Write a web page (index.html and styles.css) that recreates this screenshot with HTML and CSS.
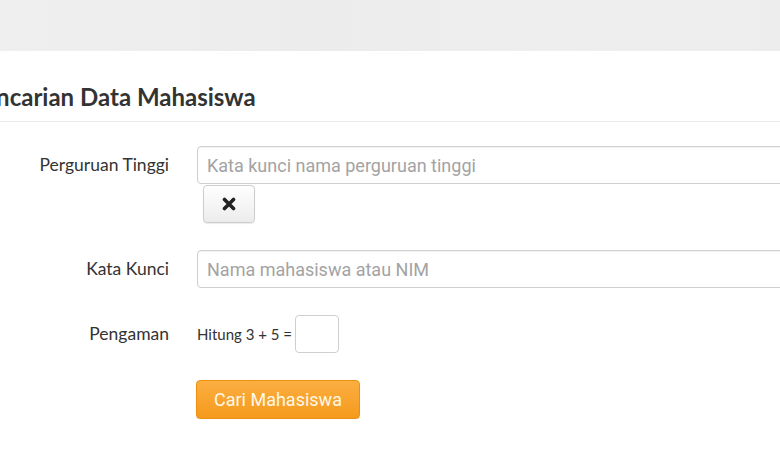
FILE: index.html
```html
<!DOCTYPE html>
<html lang="id">
<head>
<meta charset="utf-8"/>
<meta content="width=device-width, initial-scale=1.0" name="viewport"/>
<title>Pencarian Data Mahasiswa</title>
<link rel="stylesheet" href="styles.css">
</head>
<body>
<div class="top-band"></div>
<div class="panel">
<h2 class="panel-title">Pencarian Data Mahasiswa</h2>
<form class="search-form" onsubmit="return false">
<label class="form-label" for="pt">Perguruan Tinggi</label>
<div class="form-field">
<input class="form-input" id="pt" type="text" placeholder="Kata kunci nama perguruan tinggi"/>
<button class="btn-clear" type="button" aria-label="Hapus">
<svg width="14" height="14" viewBox="0 0 14 14"><path d="M2.5 2.5 L11.5 11.5 M11.5 2.5 L2.5 11.5" stroke="#222" stroke-width="3.6" stroke-linecap="round"/></svg>
</button>
</div>
<label class="form-label" for="keyword">Kata Kunci</label>
<div class="form-field">
<input class="form-input" id="keyword" type="text" placeholder="Nama mahasiswa atau NIM"/>
</div>
<label class="form-label" for="captcha">Pengaman</label>
<div class="form-field captcha">
<span>Hitung 3 + 5 =</span>
<input class="captcha-input" id="captcha" type="text"/>
</div>
<div></div>
<div class="form-field">
<button class="btn-search" type="submit">Cari Mahasiswa</button>
</div>
</form>
</div>
</body>
</html>
```

FILE: styles.css
```css
html, body {
  margin: 0;
  background: #fff;
  overflow: hidden;
}

body {
  font-family: 'Lato', 'Open Sans', sans-serif;
  color: #333;
}

.top-band {
  height: 51px;
  background: linear-gradient(90deg, #efefef, #ececec 40%, #eeeeee 70%, #ededed);
}

.panel {
  margin-left: -28px;
  width: 900px;
}

.panel-title {
  margin: 0;
  padding: 31px 0 10px;
  text-indent: -3px;
  font-family: 'Lato', sans-serif;
  font-size: 24px;
  line-height: 29px;
  font-weight: 700;
  color: #333;
  border-bottom: 1px solid #eaeaea;
}

.search-form {
  display: grid;
  grid-template-columns: 197px 660px;
  column-gap: 28px;
  row-gap: 27px;
  padding-top: 24px;
}

.form-label {
  text-align: right;
  font-size: 17.5px;
  line-height: 37px;
  color: #333;
}

.form-field {
  display: flex;
  flex-direction: column;
  align-items: flex-start;
}

.form-input {
  box-sizing: border-box;
  width: 100%;
  height: 38px;
  padding: 0 9px;
  border: 1px solid #cfcfcf;
  border-radius: 4px;
  font-family: 'Roboto', sans-serif;
  font-size: 18px;
  color: #333;
  box-shadow: inset 0 1px 1px rgba(0,0,0,0.05);
}

.form-input::placeholder {
  color: #a3a3a3;
}

.btn-clear {
  margin: 1px 0 0 6px;
  width: 52px;
  height: 38px;
  border: 1px solid #cdcdcd;
  border-radius: 4px;
  background: linear-gradient(#ffffff, #ececec);
  box-shadow: 0 1px 1px rgba(0,0,0,0.08);
  display: flex;
  align-items: center;
  justify-content: center;
  padding: 0;
}

.captcha {
  flex-direction: row;
  align-items: center;
  font-size: 15px;
}

.captcha span {
  margin-right: 3px;
}

.captcha-input {
  box-sizing: border-box;
  width: 44px;
  height: 38px;
  border: 1px solid #cfcfcf;
  border-radius: 4px;
}

.btn-search {
  margin-left: -1px;
  height: 39px;
  padding: 0 17px;
  border: 1px solid #ec9012;
  border-radius: 4px;
  background: linear-gradient(#fbae41, #f59a1c);
  color: #fff8e8;
  font-family: 'Roboto', sans-serif;
  font-size: 18px;
  box-shadow: 0 1px 1px rgba(0,0,0,0.1);
}
```
